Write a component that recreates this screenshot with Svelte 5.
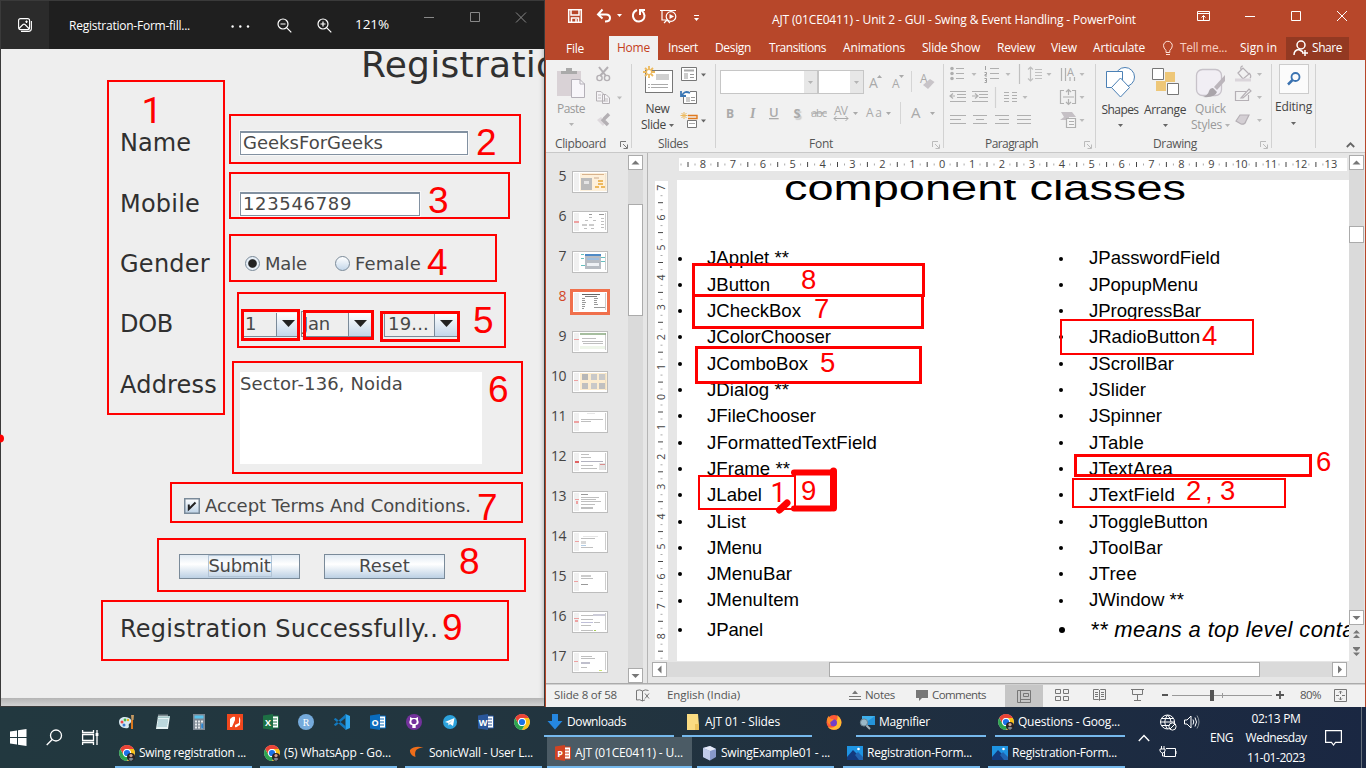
<script>
  // Adjusts tracking so that a label occupies its designed width.
  function fit(node, width) {
    const n = [...node.textContent].length;
    const natural = node.getBoundingClientRect().width;
    node.style.letterSpacing = (width - natural) / n + 'px';
  }

  const tabs = [['Insert', 30, 667], ['Design', 36, 714], ['Transitions', 57, 768], ['Animations', 62, 842], ['Slide Show', 58, 921], ['Review', 38, 996], ['View', 26, 1050], ['Articulate', 52, 1092]];
  const leftList = [['JApplet **', 82], ['JButton', 63], ['JCheckBox', 94], ['JColorChooser', 124], ['JComboBox', 101], ['JDialog **', 82], ['JFileChooser', 109], ['JFormattedTextField', 170], ['JFrame **', 83], ['JLabel', 55], ['JList', 39], ['JMenu', 55], ['JMenuBar', 85], ['JMenuItem', 92], ['JPanel', 56]];
  const rightList = [['JPasswordField', 131], ['JPopupMenu', 109], ['JProgressBar', 112], ['JRadioButton', 111], ['JScrollBar', 85], ['JSlider', 57], ['JSpinner', 73], ['JTable', 55], ['JTextArea', 84], ['JTextField', 86], ['JToggleButton', 119], ['JToolBar', 74], ['JTree', 48], ['JWindow **', 95]];

  const r = '#e88', g = '#aaa', d = '#777';
  const thumbs = [
    [5, [[7, 1, 27, 18, '#fdebd0'], [9, 2, 22, 1, '#c96'], [8, 6, 11, 12, '#a5a5a5'], [11, 9, 5, 3, '#ddd'], [21, 5, 5, 2, '#db9'], [25, 8, 5, 2, '#e7a22a'], [25, 11, 5, 2, '#e7a22a'], [22, 14, 4, 2, '#e7a22a'], [28, 14, 4, 2, '#e7a22a']]],
    [6, [[1, 9, 5, 2, r], [16, 2, 3, 1, d], [16, 5, 3, 1, g], [12, 8, 3, 1, g], [20, 8, 3, 1, g], [9, 12, 5, 2, '#bbb'], [16, 12, 5, 2, '#bbb'], [11, 16, 3, 1, g], [18, 16, 3, 1, g], [26, 2, 5, 1, d], [28, 6, 3, 1, g], [28, 9, 3, 1, g], [28, 12, 3, 1, g], [28, 15, 3, 1, g]]],
    [7, [[12, 2, 16, 2, '#1464b4'], [12, 4, 16, 13, '#a0a6b0'], [14, 6, 12, 2, '#7fa9d3'], [14, 11, 12, 3, '#e9edf2'], [8, 2, 3, 1, '#3aa'], [8, 6, 3, 1, '#3aa'], [8, 13, 4, 1, '#3aa'], [28, 5, 4, 1, '#3aa'], [28, 9, 4, 1, '#3aa']]],
    [8, [[9, 2, 18, 1, '#333'], [12, 4, 12, 1, '#555'], [9, 6, 3, 1, d], [9, 8, 3, 1, d], [9, 10, 4, 1, d], [9, 12, 3, 1, d], [9, 14, 3, 1, d], [9, 16, 2, 1, d], [21, 6, 4, 1, d], [21, 8, 3, 1, d], [21, 10, 3, 1, d], [21, 12, 4, 1, d], [21, 15, 11, 1, d]]],
    [9, [[7, 1, 26, 2, '#89a97f'], [1, 7, 5, 1, r], [9, 6, 14, 1, g], [9, 9, 21, 1, g], [10, 11, 20, 1, g], [7, 14, 25, 3, '#eaf3e3']]],
    [10, [[7, 1, 27, 17, '#fbe6bf'], [9, 2, 6, 6, '#a0a0a0'], [18, 2, 6, 6, '#b8b8b8'], [26, 2, 6, 6, '#b8b8b8'], [9, 11, 6, 6, '#acacac'], [18, 11, 6, 6, '#b8b8b8'], [26, 11, 6, 6, '#acacac'], [1, 8, 4, 1, r]]],
    [11, [[1, 9, 5, 2, r], [8, 7, 22, 1, g], [8, 9, 10, 1, g], [14, 1, 8, 1, '#ddd']]],
    [12, [[2, 9, 4, 2, '#d33'], [8, 2, 8, 1, g], [8, 5, 10, 1, g], [8, 9, 22, 1, '#99a'], [26, 11, 6, 7, '#ddd'], [27, 12, 5, 1, '#c66'], [8, 13, 12, 1, g], [8, 16, 16, 1, g]]],
    [13, [[2, 7, 4, 1, r], [3, 9, 2, 3, r], [8, 2, 7, 1, d], [8, 5, 18, 1, g], [8, 7, 15, 1, g], [8, 9, 20, 1, g], [8, 12, 14, 1, g], [8, 15, 12, 2, g]]],
    [14, [[2, 9, 4, 1, r], [10, 4, 15, 1, '#ddd'], [8, 6, 14, 1, g], [8, 9, 5, 3, '#ccc'], [8, 13, 5, 1, '#9bd'], [8, 15, 12, 1, g]]],
    [15, [[1, 9, 4, 1, r], [8, 3, 10, 2, '#bbb'], [8, 6, 12, 1, g], [8, 12, 7, 1, d]]],
    [16, [[1, 6, 5, 1, r], [2, 8, 3, 2, r], [8, 3, 12, 1, g], [20, 2, 12, 2, '#bbc'], [8, 7, 12, 1, g], [8, 10, 12, 1, '#aac'], [21, 10, 6, 1, g], [8, 13, 10, 1, g], [8, 18, 12, 1, g], [21, 18, 2, 1, '#8b2']]],
    [17, [[1, 9, 4, 1, r], [8, 4, 11, 1, g], [8, 6, 14, 1, g], [8, 10, 9, 2, '#aab'], [8, 15, 6, 1, g], [26, 18, 3, 1, '#bd4']]]
  ];

  const boxes = [
    [107, 80, 118, 335, 2], [229, 114, 292, 50, 2], [229, 172, 281, 47, 2], [229, 234, 268, 48, 2], [237, 292, 269, 56, 2],
    [241, 309, 59, 32, 3], [303, 310, 71, 30, 3], [380, 311, 80, 31, 3], [232, 361, 291, 113, 2], [170, 482, 353, 41, 2],
    [157, 538, 369, 54, 2], [101, 600, 408, 61, 2],
    [692, 263, 233, 34, 3], [692, 294, 232, 35, 3], [695, 346, 227, 38, 3], [698, 475, 98, 35, 2],
    [1060, 319, 194, 36, 2], [1074, 454, 238, 23, 3], [1072, 478, 214, 30, 2]
  ];
  const marks = [
    ['1', 141.5, 123], ['2', 476, 155], ['3', 428, 213], ['4', 427, 275], ['5', 473, 333], ['6', 488, 402], ['7', 477, 520], ['8', 459, 574], ['9', 442, 640]
  ];
  const smallMarks = [['8', 801, 289], ['7', 814, 318], ['5', 820, 372], ['1', 770.5, 502], ['9', 801, 500], ['4', 1202, 345], ['6', 1316, 471], ['2', 1186, 500], [',', 1205, 500], ['3', 1220, 500]];

  const pinned = ['paint', 'notepad', 'calc', 'nitro', 'excel', 'r', 'code', 'outlook', 'github', 'telegram', 'word', 'chrome'];
  const topTasks = [['down', 'Downloads', 59, 130, 0, 0], ['folder', 'AJT 01 - Slides', 75, 130, 8, 0], ['firefox', '', 0, 36, 4, 0], ['magnify', 'Magnifier', 51, 130, 4, 0], ['chromeUser', 'Questions - Goog...', 102, 130, 9, 0]];
  const bottomTasks = [['chromeUser', 'Swing registration ...', 107, 137, 0, 1], ['chromeUser', '(5) WhatsApp - Go...', 107, 137, 8, 1], ['sonic', 'SonicWall - User L...', 104, 137, 8, 1], ['ppt', 'AJT (01CE0411) - U...', 108, 145, 5, 5], ['java', 'SwingExample01 - ...', 109, 137, 5, 1], ['photo', 'Registration-Form...', 105, 137, 9, 1], ['photo', 'Registration-Form...', 105, 137, 8, 1]];
  const hNums = Array.from({ length: 22 }, (_, i) => i - 8);
  const vNums = Array.from({ length: 16 }, (_, i) => i - 7);
</script>

{#snippet caret(c = '#b4b4b4')}<svg class="caret" width="5" height="3"><path d="M0 0H5L2.5 3Z" fill={c} /></svg>{/snippet}
{#snippet launcher(c = '#777')}<svg width="8" height="8" fill="none" stroke={c}><path d="M.5 6V.5H6M3 3L7 7M7.5 3.5V7.5H3.5" /></svg>{/snippet}
{#snippet chrome()}
  <circle cx="8" cy="8" r="7.8" fill="#fff" />
  <path d="M1.2 4.1A7.8 7.8 0 0 1 14.8 4.1H8A4 4 0 0 0 4.5 9.9Z" fill="#ea4335" />
  <path d="M14.8 4.1A7.8 7.8 0 0 1 8 15.8L11.5 10A4 4 0 0 0 8 4.1Z" fill="#fbc116" />
  <path d="M1.2 4.1A7.8 7.8 0 0 0 8 15.8L11.4 10A4 4 0 0 1 4.5 10Z" fill="#2da44e" />
  <circle cx="8" cy="8" r="3.9" fill="#fff" /><circle cx="8" cy="8" r="3.1" fill="#1a73e8" />
{/snippet}
{#snippet app(name)}
  <svg class="app" width="16" height="16" viewBox="0 0 16 16">
    {#if name === 'paint'}
      <path d="M0 8C0 3 6 2 10 4C14 6 12 9 10 10C9 11 11 13 9 14C4 15 0 12 0 8Z" fill="#d7e8f0" /><circle cx="3" cy="8" r="1.5" fill="#e44" /><circle cx="6" cy="6" r="1.4" fill="#48b64b" /><circle cx="5" cy="11" r="1.5" fill="#3b7bd0" /><circle cx="9" cy="6" r="1.2" fill="#e7b21a" /><path d="M13 6V15" stroke="#d9781e" stroke-width="2" /><path d="M12 1h3l-.5 5h-2z" fill="#c79a62" />
    {:else if name === 'notepad'}
      <path d="M3 2H15L13 15H1Z" fill="#e7f3f4" /><path d="M3 2H15L14.6 4H2.7Z" fill="#a5c9ca" /><path d="M3 6H13M3 8H13M2.5 10H12.5M2.3 12H12" stroke="#8ebbc4" /><path d="M4 .5V3M6 .5V3M8 .5V3M10 .5V3M12 .5V3" stroke="#d7dee0" />
    {:else if name === 'calc'}
      <path d="M2 0H14V16H2Z" fill="#7d8893" /><path d="M3.5 1.5h9v3h-9z" fill="#57c2ec" /><path d="M4 7.5h8M4 10.5h8M4 13.5h8" stroke="#e5e9ec" stroke-width="2" stroke-dasharray="2 1" /><path d="M10.2 9.5h2v5h-2z" fill="#2b84d0" />
    {:else if name === 'nitro'}
      <path d="M0 0H16V16H0Z" fill="#f1471d" /><path d="M3 5C5 4 5 2 8 3V11L12 9V3C14 5 13 8 13 11C10 12 10 14 8 13V6L5 13H3Z" fill="#fff" />
    {:else if name === 'excel' || name === 'word' || name === 'outlook' || name === 'ppt'}
      {@const c = { excel: '#1d7044', word: '#2a5699', outlook: '#0a6cbd', ppt: '#d04423' }[name]}
      <path d="M8 2H15.5V14H8Z" fill="#fff" stroke={c} /><path d="M10 5H14M10 8H14M10 11H14" stroke={c} /><path d="M0 1.5L10 0V16L0 14.5Z" fill={c} />
      <text x="5" y="11.5" text-anchor="middle" font-size="9" font-weight="700" fill="#fff">{{ excel: 'X', word: 'W', outlook: 'O', ppt: 'P' }[name]}</text>
    {:else if name === 'r'}
      <circle cx="8" cy="8" r="8" fill="#75aadb" /><text x="8" y="11.5" text-anchor="middle" font-size="10" fill="#fff" class="serif">R</text>
    {:else if name === 'code'}
      <path d="M11.5 0L16 2V14L11.5 16Z" fill="#2aa5ee" /><path d="M0 5L1.6 4L12 12.5V16L0 5.5ZM0 11L1.6 12L12 3.5V0L0 10.5Z" fill="#1379be" />
    {:else if name === 'github'}
      <circle cx="8" cy="8" r="8" fill="#73329c" /><path d="M4 3L6 4H10L12 3V6C14 10 11 11 9.7 11V14H6.3V11C5 11 2 10 4 6Z" fill="#fff" /><circle cx="8" cy="7.5" r="2.6" fill="#73329c" />
    {:else if name === 'telegram'}
      <circle cx="8" cy="8" r="7" fill="#2ca2dc" /><path d="M3 8L12.5 4L11 12L8 10L6.5 11.5L6.3 9Z" fill="#fff" /><path d="M6.3 9L11 5.5L7.5 9.5Z" fill="#b5d8ea" />
    {:else if name === 'chrome'}{@render chrome()}
    {:else if name === 'chromeUser'}
      {@render chrome()}<circle cx="12" cy="12" r="4" fill="#2a2426" /><circle cx="12" cy="10.5" r="1.6" fill="#dca48d" /><path d="M9.5 14Q12 11.5 14.5 14L12 16Z" fill="#7f8994" />
    {:else if name === 'sonic'}
      <path d="M1 5C4 1.5 9 1 14.5 2.5C8 3 5 5 6.5 12C3 11 .5 8 1 5Z" fill="#ee6d1a" />
    {:else if name === 'down'}
      <path d="M5 0H11V7H15.5L8 15.5L.5 7H5Z" fill="#2587e0" />
    {:else if name === 'folder'}
      <path d="M2 0H13L14 12V16H2Z" fill="#fbdc82" /><path d="M10 15.9V10H14V16Z" fill="#ecc35c" />
    {:else if name === 'firefox'}
      <circle cx="8" cy="8.5" r="7.5" fill="#ff5a36" /><path d="M11 1C15 4 16 8 15 11C13 17 5 17 2 13C7 15 12 12 10 7C12 5 12 3 11 1Z" fill="#ffbd30" /><circle cx="7.5" cy="8.7" r="3.5" fill="#7440c7" /><path d="M1 5L2.5 2L5 5L8 5L6 7Q3 8 5 11Q1 10 1 5Z" fill="#ff8a28" />
    {:else if name === 'magnify'}
      <path d="M3 2H16V11H3Z" fill="#3eb0ec" /><path d="M3 11L16 2V11Z" fill="#2493da" /><circle cx="5" cy="8.5" r="3.6" fill="#9cb9c8" stroke="#6f8591" /><path d="M7.5 11.5L11 15" stroke="#a7b3b9" stroke-width="2" />
    {:else if name === 'java'}
      <path d="M2 3L9 1L15 4V12L9 15.5L2 12Z" fill="#8798c8" /><path d="M2 3L9 1L15 4L9 6Z" fill="#e5eaf8" /><path d="M2 3L9 6V15.5L2 12Z" fill="#c0cbe9" />
    {:else}
      <path d="M0 1H16V15H0Z" fill="#1e94e2" /><path d="M0 12L6 5L16 15H0Z" fill="#133a7d" /><path d="M8 10L11 7L16 12V15H12Z" fill="#2164b0" /><circle cx="11.5" cy="4" r="1.3" fill="#fff" />
    {/if}
  </svg>
{/snippet}
{#snippet task(t)}
  <div class="task" class:active={t[0] === 'ppt'} class:bare={!t[1]} style:width="{t[3]}px" style:margin-left="{t[4]}px" style:--pad="{t[5] + 3}px">
    {@render app(t[0])}{#if t[1]}<span use:fit={t[2]}>{t[1]}</span>{/if}
  </div>
{/snippet}
{#snippet arrowBtn(path)}<div class="sb-btn"><svg width="9" height="9" viewBox="0 0 9 9"><path d={path} fill="#777" /></svg></div>{/snippet}

<main>
  <section class="photos">
    <header>
      <div class="home">
        <svg width="14" height="14" fill="none" stroke="#fff" stroke-width="1.1"><rect x=".6" y=".6" width="11" height="11" rx="2" /><path d="M3 13.4H10.5Q13.4 13.4 13.4 10.5V3M1 10.5L5 6.5Q6 5.7 7 6.5L11.4 11" /><path d="M7.2 3.8H9.8M8.5 2.5V5.1" /></svg>
      </div>
      <span class="file" use:fit={121}>Registration-Form-fill...</span>
      <svg class="dots" width="19" height="3" fill="#fff"><circle cx="1.6" cy="1.5" r="1.2" /><circle cx="9.3" cy="1.5" r="1.2" /><circle cx="17" cy="1.5" r="1.2" /></svg>
      <svg class="zo" width="15" height="15" fill="none" stroke="#fff" stroke-width="1.2"><circle cx="6" cy="6" r="5" /><path d="M3.5 6H8.5M9.8 9.8L14.3 14.3" /></svg>
      <svg class="zi" width="15" height="15" fill="none" stroke="#fff" stroke-width="1.2"><circle cx="6" cy="6" r="5" /><path d="M3.5 6H8.5M6 3.5V8.5M9.8 9.8L14.3 14.3" /></svg>
      <span class="pct" use:fit={34}>121%</span>
      <svg class="win" width="102" height="11" fill="none" stroke="#888"><path d="M0 5.5H10M46.5 .5H55.5V9.5H46.5ZM92 .5L102 10.5M102 .5L92 10.5" /></svg>
    </header>
    <div class="form">
      <h1><span use:fit={324}>Registration Form</span></h1>
      <div class="row"><label for="nm"><b use:fit={71}>Name</b></label><div class="field wide" id="nm"><span use:fit={140}>GeeksForGeeks</span></div></div>
      <div class="row"><label for="mb"><b use:fit={80}>Mobile</b></label><div class="field" id="mb"><span use:fit={109}>123546789</span></div></div>
      <div class="row"><label for="gd"><b use:fit={90}>Gender</b></label>
        <div class="radios" id="gd"><i class="on"></i><span use:fit={42}>Male</span><i class="second"></i><span use:fit={66}>Female</span></div>
      </div>
      <div class="row"><label for="dob"><b use:fit={53}>DOB</b></label>
        <div class="combos" id="dob">
          {#each [['1', 59, 10], ['Jan', 71, 27], ['19...', 74, 41]] as c}
            <div class="combo" style:width="{c[1]}px"><span use:fit={c[2]}>{c[0]}</span><em><svg width="13" height="8"><path d="M0 0H13L6.5 7Z" fill="#222" /></svg></em></div>
          {/each}
        </div>
      </div>
      <div class="row address"><label for="ad"><b use:fit={97}>Address</b></label><div class="area" id="ad"><span use:fit={163}>Sector-136, Noida</span></div></div>
      <div class="terms"><svg width="16" height="16"><rect x=".75" y=".75" width="14.5" height="14.5" fill="url(#blu)" stroke="#7a8a99" stroke-width="1.5" /><defs><linearGradient id="blu" x2="0" y2="1"><stop stop-color="#fff" /><stop offset="1" stop-color="#bdd2e6" /></linearGradient></defs><path d="M4.8 6.5V11.2L11.5 4.5" fill="none" stroke="#222" stroke-width="2" /></svg><span use:fit={266}>Accept Terms And Conditions.</span></div>
      <div class="buttons"><div class="btn"><u><span use:fit={62}>Submit</span></u></div><div class="btn"><span use:fit={51}>Reset</span></div></div>
      <div class="result"><span use:fit={318}>Registration Successfully..</span></div>
    </div>
    <div class="shade"></div>
  </section>

  <section class="ppt">
    <header>
      <svg class="quick" width="150" height="20" viewBox="562 6 150 20" fill="none" stroke="#fff" stroke-width="1.5">
        <path d="M568.7 9.7H581.3V22.3H568.7ZM571 10V15H579V10M571.5 22V18H578.5V22" /><path d="M576 19V22" />
        <path d="M598 14.5H606Q610 14.5 610 18T605 21.5M602.5 9.5L598 14.5L602.5 18.5" stroke-width="2" /><path d="M617 14H622L619.5 17Z" fill="#fff" stroke="none" />
        <path d="M637 10Q632.5 12 633 16.5Q634 21.5 639 21.5Q644.5 21 644.5 15.5Q644 12 641.5 10.5M640 15V10H645" stroke-width="2" />
        <path d="M660 10.5H676M662 11V20H667M664 23L667 20L670 23" stroke-width="1.2" /><circle cx="671" cy="16.5" r="4.8" stroke-width="1.2" /><path d="M669.5 14L674 16.5L669.5 19Z" fill="#fff" stroke="none" />
        <path d="M694 15.5H699" stroke-width="1" /><path d="M694 18H699L696.5 21Z" fill="#fff" stroke="none" />
      </svg>
      <span class="title" use:fit={364}>AJT (01CE0411) - Unit 2 - GUI - Swing &amp; Event Handling - PowerPoint</span>
      <svg class="ctl" width="151" height="12" fill="none" stroke="#fff"><path d="M.5 1.5H12.5V10.5H.5ZM.5 3.5H12.5M6.5 10V5.5M4.5 7.5L6.5 5.5L8.5 7.5M48 6.5H58M94.5 1.5H103.5V10.5H94.5ZM140 1L150 11M150 1L140 11" /></svg>
    </header>
    <nav>
      <div class="filetab"><span use:fit={18}>File</span></div>
      <div class="hometab"><span use:fit={33}>Home</span></div>
      <div class="tabs">{#each tabs as t, i}<span style:margin-left="{i ? t[2] - tabs[i - 1][2] - tabs[i - 1][1] : 9}px" use:fit={t[1]}>{t[0]}</span>{/each}</div>
      <svg class="bulb" width="10" height="15" fill="none" stroke="#ffe2d8"><path d="M3 9.5Q.5 7 .5 4.7A4.4 4.4 0 0 1 9.3 4.7Q9.3 7 6.8 9.5V11.5H3ZM3 13.5H7" /></svg>
      <span class="tell" use:fit={47}>Tell me...</span><span class="sign" use:fit={37}>Sign in</span>
      <div class="share"><svg width="16" height="17" fill="none" stroke="#fff" stroke-width="1.5"><circle cx="8" cy="5" r="4" /><path d="M1 15Q1 10 6 9.5L10 12M12 10V16M9 13H15" /></svg><span use:fit={30}>Share</span></div>
    </nav>
    <div class="ribbon">
      <div class="group" style:width="86px">
        <div class="gbody">
          <div class="big paste"><svg width="29" height="32" viewBox="559 67 29 32"><path d="M559 71H583V96H559Z" fill="#d9d2d6" /><path d="M563 74V71H568V68H574V71H579V74Z" fill="#aaa" /><path d="M573.5 79.5H582L586.5 84V97.5H573.5Z" fill="#f8f6fa" stroke="#b4b0b8" /><path d="M582 79.5V84H587" fill="none" stroke="#b4b0b8" /></svg><span class="dim" use:fit={28}>Paste</span>{@render caret()}</div>
          <svg class="tools" width="35" height="65" viewBox="594 64 35 65" fill="none" stroke="#b4b0b4" stroke-width="1.4"><path d="M599 67L606 76M608 67L600 76" stroke-width="2" /><circle cx="599.5" cy="78" r="2.6" /><circle cx="607" cy="78" r="2.6" /><path d="M596.5 91.5H601L604.5 95V101H596.5ZM602.5 94.5H606L609.5 98V103.5H602.5Z" fill="#f5f3f6" stroke-width="1" /><path d="M598 95H601M598 98H601M604 99H608M604 101H608" stroke-width=".8" /><path d="M617 96.5H622L619.5 99.5Z" fill="#bbb" stroke="none" /><path d="M597 120L601 117L606 122L603 126Z" fill="#ded9dd" stroke="none" /><path d="M602 119L608 125M604 119L609 114" stroke-width="3.5" /></svg>
        </div>
        <footer><span use:fit={51}>Clipboard</span><div class="la">{@render launcher()}</div></footer>
      </div>
      <div class="group" style:width="84px">
        <div class="gbody">
          <div class="big new"><svg width="31" height="30" viewBox="640 65 31 30"><rect x="643.5" y="70.5" width="27" height="22" fill="#fff" stroke="#777" /><path d="M654 74H667V80H654Z" fill="#d0d0d0" /><path d="M646 84.5H667M646 87.5H667" stroke="#aaa" stroke-dasharray="2 1 17 1" /><path d="M647 66V78M641 72H653M643 68L651 76M651 68L643 76" stroke="#ecb95e" stroke-width="1.8" /><circle cx="647" cy="72" r="2" fill="#fff" /></svg><span use:fit={24}>New</span><div class="sl"><span use:fit={25}>Slide</span>{@render caret('#666')}</div></div>
          <svg class="tools2" width="27" height="63" viewBox="680 66 27 63" fill="none" stroke="#777"><path d="M681.5 67.5H696.5V80.5H681.5Z" fill="#fff" /><path d="M684 70.5H694" stroke="#aaa" stroke-width="2" /><path d="M684 73H688V79H684Z" fill="#ccc" stroke="none" /><path d="M690 74.5H694M690 77.5H694" stroke="#999" /><path d="M701 73.5H706L703.5 76.5Z" fill="#666" stroke="none" /><path d="M683.5 96V103.5H696.5V91.5H690" fill="#fff" /><path d="M686 97H690V102H686Z" fill="#ccc" stroke="none" /><path d="M691 97.5H695M691 100.5H695" stroke="#999" /><path d="M682 96Q684 90 690 93M681 91V96H686" stroke="#3a76b4" stroke-width="1.8" /><path d="M684 112V119M680.5 115.5H687.5M681.5 113L686.5 118M686.5 113L681.5 118" stroke="#ecb95e" /><path d="M688 115.5H697V118.5H688" stroke="#e07a1f" stroke-width="1.4" /><path d="M687.5 120.5H696.5V127.5H687.5Z" fill="#fff" /><path d="M689 123.5H695" stroke="#aaa" /><path d="M701 119.5H706L703.5 122.5Z" fill="#666" stroke="none" /></svg>
        </div>
        <footer class="mid"><span use:fit={30}>Slides</span></footer>
      </div>
      <div class="group" style:width="228px">
        <div class="gbody font">
          <div class="frow"><div class="sel"><em>{@render caret()}</em></div><div class="sel small"><em>{@render caret()}</em></div>
            <svg width="79" height="26" viewBox="865 69 79 26" fill="#aaa" font-size="14"><text x="870" y="88">A</text><path d="M878 78H883L880.5 75Z" /><text x="893" y="88" font-size="12">A</text><path d="M900 75H905L902.5 78Z" /><path d="M912.5 71V92" stroke="#d5d5d5" /><text x="921" y="83" font-size="12">A</text><path d="M924 85L931 79L935.5 82L929 89Z" fill="#c8c4c8" /></svg>
          </div>
          <svg class="style" width="227" height="24" viewBox="716 102 227 24" fill="#aaa" font-size="13"><text x="726" y="118" font-weight="700" font-size="12">B</text><text x="750" y="118" class="serif" font-style="italic" font-size="14" font-weight="700">I</text><text x="769" y="117" text-decoration="underline" font-weight="600">U</text><text x="793.5" y="118" font-weight="700" class="sh">S</text><text x="811" y="117" font-size="11" text-decoration="line-through" textLength="16">abc</text><text x="834" y="115" font-size="12" textLength="14">AV</text><path d="M834 118.5H848M836.5 116L834 118.5L836.5 121M845.5 116L848 118.5L845.5 121" fill="none" stroke="#aaa" /><path d="M853 112H858L855.5 115Z" /><text x="866" y="117" font-size="12" textLength="16">Aa</text><path d="M886 112H891L888.5 115ZM930 112H935L932.5 115Z" /><path d="M900.5 102V124" stroke="#d5d5d5" /><text x="911" y="118" font-size="15">A</text></svg>
        </div>
        <footer class="mid"><span class="fl" use:fit={24}>Font</span><div class="la">{@render launcher('#bbb')}</div></footer>
      </div>
      <div class="group" style:width="152px">
        <div class="gbody">
          <svg width="150" height="70" viewBox="945 62 150 70" fill="none" stroke="#b0b0b0" stroke-width="1.2">
            {#each [68.5, 73.5, 78.5] as y}<path d="M957 {y}H965M991 {y}H1000" /><circle cx="953" cy={y} r="1.2" fill="#aaa" />{/each}
            <path d="M986.5 66V70M985.5 72.5H987.5V74.5H986V76H988M985.5 78.5H987.5V82.5H985.5M986 80.5H987" stroke="#999" stroke-width=".9" />
            <path d="M1020.5 64V84M1031.5 67V81M1029 69.5L1031.5 67L1034 69.5M1029 78.5L1031.5 81L1034 78.5M1036 69.5H1043M1036 72.5H1043M1036 75.5H1043M1036 78.5H1043" stroke="#c0c0c0" />
            <path d="M1062.5 68V81M1066.5 68V81M1071 77V81M1075.5 77V81" /><text x="1068" y="76" font-size="11" fill="#aaa" stroke="none">A</text>
            <path d="M951 91.5H967M958 94.5H967M958 97.5H967M951 101.5H967M951 96H956M954 93.5L951 96L954 98.5M973 91.5H989M980 94.5H989M980 97.5H989M973 101.5H989M973 96H978M976 93.5L979 96L976 98.5" /><path d="M996.5 87V108" stroke="#d2d2d2" />
            <path d="M1005 92.5H1010M1013 92.5H1018M1005 95.5H1010M1013 95.5H1018M1005 98.5H1010M1013 98.5H1018M1005 101.5H1010M1013 101.5H1018" />
            <path d="M1065 90.5H1061.5V103.5H1065M1073 90.5H1076.5V103.5H1073M1069.5 95V90M1067 92L1069.5 89.5L1072 92M1069.5 99V104M1067 102L1069.5 104.5L1072 102M1064 97H1075" />
            <path d="M951 115.5H967M951 119.5H962M951 123.5H967M974 115.5H988M977 119.5H985M974 123.5H988M996 115.5H1010M1000 119.5H1010M996 123.5H1010M1018 115.5H1032M1018 119.5H1032M1018 123.5H1032" />
            <path d="M1062 112H1073L1077 117H1070V120H1061L1065 117Z" fill="#c5c0c5" stroke="none" /><path d="M1067.5 118.5H1076.5V127.5H1067.5ZM1070 121.5H1075M1070 124.5H1075" fill="#f5f5f5" />
            {#each [[975, 74], [1009, 74], [1050, 74], [1083, 74], [1026, 97], [1083, 97], [1083, 120]] as c}<path d="M{c[0] - 2.5} {c[1] - 1}h5l-2.5 3z" fill="#bbb" stroke="none" />{/each}
          </svg>
        </div>
        <footer class="mid"><span class="pl" use:fit={53}>Paragraph</span><div class="la">{@render launcher('#bbb')}</div></footer>
      </div>
      <div class="group" style:width="176px">
        <div class="gbody">
          <div class="big shapes"><svg width="30" height="30" viewBox="1105 67 30 30" fill="#fff" stroke="#4b80b5"><circle cx="1125" cy="77" r="9.5" /><path d="M1106.5 71.5H1122.5V87.5H1106.5Z" /><path d="M1120.5 78L1129.5 87.5L1120.5 97L1111.5 87.5Z" /></svg><span use:fit={37}>Shapes</span>{@render caret('#666')}</div>
          <div class="big arrange"><svg width="28" height="30" viewBox="1150 67 28 30"><path d="M1164 72H1174V82H1164ZM1155 81H1165V91H1155Z" fill="#eec778" /><path d="M1151.5 68.5H1162.5V79.5H1151.5ZM1166.5 83.5H1177.5V94.5H1166.5Z" fill="#fff" stroke="#777" /></svg><span use:fit={42}>Arrange</span>{@render caret('#666')}</div>
          <div class="big styles"><svg width="31" height="32" viewBox="1196 67 31 32"><rect x="1197.5" y="69.5" width="25" height="26" rx="6" fill="#f1eef4" stroke="#c7c2c9" stroke-width="1.3" /><path d="M1226 75V81L1218 90L1215 87Z" fill="#bbb5bb" /><path d="M1214 88L1218 92Q1216 98 1204 97Q1209 95 1210 91Q1211 88 1214 88Z" fill="#aaa5aa" /></svg><span class="dim" use:fit={31}>Quick</span><div class="sl dim"><span use:fit={31}>Styles</span>{@render caret()}</div></div>
          <svg class="tools3" width="30" height="62" viewBox="1234 65 30 62" fill="none" stroke="#b5b0b5" stroke-width="1.2"><path d="M1238 73L1243 68L1249 74L1243 79ZM1241 70Q1240 66 1243 66M1249 73Q1252 76 1250 78" /><path d="M1235 80H1251" stroke="#dad5da" stroke-width="3" /><path d="M1246 91.5H1235.5V100.5H1248.5V95M1241 98L1249 89L1251 91L1243 98Z" /><path d="M1236 121L1240 115H1249L1246 121Q1245 125 1241 124Z" fill="#d4cfd4" />{#each [74, 97, 120] as y}<path d="M1257 {y - 1}h5l-2.5 3z" fill="#bbb" stroke="none" />{/each}</svg>
        </div>
        <footer class="mid"><span class="dl" use:fit={44}>Drawing</span><div class="la">{@render launcher('#bbb')}</div></footer>
      </div>
      <div class="group" style:width="44px">
        <div class="big edit"><div class="find"><svg width="14" height="14" fill="none" stroke="#3a72b0" stroke-width="1.8"><circle cx="8.5" cy="5" r="4" /><path d="M5.5 8L1 12.5" stroke-width="2.5" /></svg></div><span use:fit={37}>Editing</span>{@render caret('#666')}</div>
      </div>
      <svg class="collapse" width="9" height="6" fill="none" stroke="#666" stroke-width="1.8"><path d="M.8 5L4.5 1.3L8.2 5" /></svg>
    </div>

    <div class="work">
      <aside>
        <div class="slides">
          {#each thumbs as t}
            <div class="th" class:cur={t[0] === 8}><span use:fit={t[0] > 9 ? 15 : 7.5}>{t[0]}</span><div class="pic"><svg width="34" height="20" shape-rendering="crispEdges"><path d="M1 1H6V19H1Z" fill="#f0f0f0" /><path d="M32.5 1V18" stroke="#ccc" /><g opacity=".75">{#each t[1] as q}<rect x={q[0]} y={q[1]} width={q[2]} height={q[3]} fill={q[4]} />{/each}</g></svg></div></div>
          {/each}
        </div>
        <div class="vbar">{@render arrowBtn('M0.5 6.5L4.5 2.5L8.5 6.5Z')}<div class="track"><div class="handle"></div></div>{@render arrowBtn('M0.5 3L4.5 7L8.5 3Z')}</div>
      </aside>
      <div class="edit-area">
        <svg class="hruler" width="668" height="13" viewBox="679 158 668 13">
          <rect x="679" y="158" width="668" height="13" fill="#fff" />
          {#each hNums as n}{@const x = 942.2 + n * 29.9}<text {x} y="168" text-anchor="middle" font-size="11" fill="#444">{Math.abs(n)}</text><path d="M{x - 15} 162V167" stroke="#444" /><path d="M{x - 8} 163.5v2M{x - 22} 163.5v2" stroke="#aaa" />{/each}
        </svg>
        <div class="mid-row">
          <svg class="vruler" width="13" height="479" viewBox="655 181 13 479">
            <rect x="655" y="181" width="13" height="479" fill="#fff" />
            {#each vNums as n}{@const y = 397 + n * 29.9}<text x="0" y="0" transform="translate(665 {y}) rotate(-90)" text-anchor="middle" font-size="10.5" fill="#444">{Math.abs(n)}</text><path d="M658 {y + 15}h5" stroke="#444" /><path d="M660.5 {y + 8}h2M660.5 {y + 22}h2" stroke="#aaa" />{/each}
          </svg>
          <div class="slide">
            <svg class="head" width="410" height="30"><text x="6" y="19.5" font-size="34.5" textLength="402" lengthAdjust="spacingAndGlyphs">component classes</text></svg>
            <div class="cols">
              <ul>{#each leftList as l}<li><span use:fit={l[1]}>{l[0]}</span></li>{/each}</ul>
              <ul>{#each rightList as l}<li><span use:fit={l[1]}>{l[0]}</span></li>{/each}<li class="note"><span use:fit={303}>** means a top level container</span></li></ul>
            </div>
          </div>
        </div>
        <div class="hbar">{@render arrowBtn('M6.5 .5L2.5 4.5L6.5 8.5Z')}<div class="track"><div class="handle"></div></div>{@render arrowBtn('M3 .5L7 4.5L3 8.5Z')}</div>
      </div>
      <div class="vbar right">{@render arrowBtn('M0.5 6.5L4.5 2.5L8.5 6.5Z')}<div class="track"><div class="handle"></div></div>{@render arrowBtn('M0.5 3L4.5 7L8.5 3Z')}
        <svg width="15" height="36" fill="#777"><path d="M4 8.5L7.5 5L11 8.5ZM4 13L7.5 9.5L11 13ZM4 23H11L7.5 26.5ZM4 27.5H11L7.5 31ZM4 22H11V23H4Z" /></svg>
      </div>
    </div>
    <div class="status">
      <span class="s1" use:fit={63}>Slide 8 of 58</span>
      <svg class="s2" width="15" height="13" fill="none" stroke="#777"><path d="M6.5 2Q4 0 .5 1.5V11Q4 10 6.5 12Q8 11 9 11M6.5 2V12M6.5 2Q9 0 12.5 1.5M9 4.5L13 9.5M13 4.5L9 9.5" /></svg>
      <span class="s3" use:fit={73}>English (India)</span>
      <svg class="s4" width="12" height="12"><path d="M3 5L6 1.5L9 5Z" fill="#777" /><path d="M0 7.5H12M0 10.5H12" stroke="#777" /></svg>
      <span class="s5" use:fit={30}>Notes</span>
      <svg class="s6" width="12" height="12"><path d="M0 1H12V9H6L3 12V9H0Z" fill="#777" /></svg>
      <span class="s7" use:fit={54}>Comments</span>
      <div class="view"><svg width="14" height="13" fill="none" stroke="#777"><path d="M.5 .5H13.5V12.5H.5ZM3.5 .5V12.5M6.5 3.5H11.5V6.5H6.5ZM4 9.5H13" /></svg></div>
      <svg class="s8" width="90" height="14" fill="none" stroke="#777"><path d="M.5 1.5H5.5V5.5H.5ZM8.5 1.5H13.5V5.5H8.5ZM.5 8.5H5.5V12.5H.5ZM8.5 8.5H13.5V12.5H8.5ZM38.5 1.5H43.5L44.5 2.5L45.5 1.5H50.5V11.5H45.5L44.5 12.5L43.5 11.5H38.5ZM44.5 2V12M40 4.5H43M40 6.5H43M40 8.5H43M46 4.5H49M46 6.5H49M46 8.5H49M76 1.5H89M77.5 2V6.5H87.5V2M82.5 7V12M79 12.5H86" /></svg>
      <svg class="slider" width="122" height="12"><path d="M0 6H6M114 6H122M118 2V10" stroke="#555" stroke-width="1.8" /><path d="M10 6.5H110M60.5 4V9" stroke="#999" /><path d="M48 1H52V12H48Z" fill="#555" /></svg>
      <span class="s9" use:fit={21}>80%</span>
      <svg width="13" height="13" fill="none" stroke="#777"><path d="M.5 .5H12.5V12.5H.5ZM6.5 2V5M6.5 8V11M2 6.5H5M8 6.5H11M5 3.5L6.5 2L8 3.5M5 9.5L6.5 11L8 9.5" /></svg>
    </div>
  </section>

  <section class="taskbar">
    <div class="sys">
      <svg width="17" height="17" fill="#fff"><path d="M0 2.4L7 1.4V8H0ZM8 1.2L16.5 0V8H8ZM0 9H7V15.6L0 14.6ZM8 9H16.5V17L8 15.8Z" /></svg>
      <svg width="17" height="17" fill="none" stroke="#fff" stroke-width="1.3"><circle cx="10" cy="6.5" r="5.5" /><path d="M6.2 10.5L.7 16" /></svg>
      <svg width="17" height="17" fill="none" stroke="#fff" stroke-width="1.3"><path d="M.6 1V3.5H11.5V1M.6 5.5H11.5V11.5H.6ZM.6 16V13.5H11.5V16M15 1V16" /><path d="M13.6 4H16.4V7H13.6Z" fill="#fff" stroke="none" /></svg>
    </div>
    <div class="apps">
      <div class="line"><div class="pins">{#each pinned as p}{@render app(p)}{/each}</div>{#each topTasks as t}{@render task(t)}{/each}</div>
      <div class="line second">{#each bottomTasks as t}{@render task(t)}{/each}</div>
    </div>
    <svg class="up" width="12" height="8" fill="none" stroke="#fff" stroke-width="1.4"><path d="M.8 7L6 1.5L11.2 7" /></svg>
    <svg class="tray" width="42" height="48" fill="none" stroke="#fff"><circle cx="7.5" cy="8" r="7" /><path d="M.5 8H14.5M2 4.5H13M2 11.5H9M7.5 1Q2 8 7.5 15M7.5 1Q11 4 11 8" /><circle cx="12.5" cy="12.5" r="3.6" fill="#1f2f40" /><path d="M10 15L15 10" /><path d="M24.5 6H27L31 2V14L27 10H24.5ZM33 5.5Q34.5 8 33 10.5M35 3.5Q38 8 35 12.5" /><path d="M37 1.5Q41 8 37 14.5" stroke="#8a949c" /><path d="M6 34.5H15.5V42.5H4.5V38M16 37V40M0 35H5V37Q4 39 2.5 39Q1 39 0 37ZM1.5 32V35M4 32V35M2.5 39V42H5" /></svg>
    <span class="lang" use:fit={23}>ENG</span>
    <div class="clock"><span use:fit={49}>02:13 PM</span><span use:fit={61}>Wednesday</span><span use:fit={58}>11-01-2023</span></div>
    <svg class="act" width="17" height="17" fill="none" stroke="#fff" stroke-width="1.2"><path d="M.6 1.6H16.4V13.4H10.5L8.5 16L6.5 13.4H.6Z" /></svg>
    <div class="peek"></div>
  </section>

  <svg class="notes-layer" width="1366" height="768" fill="none" stroke="#f00">
    {#each boxes as b}<rect x={b[0] + b[4] / 2} y={b[1] + b[4] / 2} width={b[2] - b[4]} height={b[3] - b[4]} stroke-width={b[4]} shape-rendering="crispEdges" />{/each}
    <path d="M794 472.5H833.5M794 508.5H831" stroke-width="6" stroke-linecap="round" /><path d="M833.5 471V508" stroke-width="7" stroke-linecap="round" />
    <path d="M779.5 510L787 503" stroke-width="7" stroke-linecap="round" />
    <g fill="#f00" stroke="none" font-size="37">{#each marks as m}<text x={m[1]} y={m[2]} class:one={m[0] === '1'}>{m[0]}</text>{/each}</g>
    <g fill="#f00" stroke="none" font-size="27.5">{#each smallMarks as m}<text x={m[1]} y={m[2]} class:one={m[0] === '1'}>{m[0]}</text>{/each}</g>
    <circle cx="0" cy="438.5" r="4" fill="#f00" stroke="none" />
  </svg>
</main>

<style>
  :global(body) { margin: 0; overflow: hidden; }
  main { position: relative; width: 1366px; height: 768px; overflow: hidden; background: #20323c; font: 12px/16px 'Open Sans', 'Noto Sans', sans-serif; color: #444; }
  main * { box-sizing: border-box; }
  span, b { white-space: pre; flex: none; }
  svg { display: block; flex: none; overflow: visible; }
  .serif { font-family: 'Liberation Serif', serif; }

  .photos { position: absolute; left: 0; top: 0; width: 545px; height: 707px; background: #eee; border: 1px solid #3a3a3a; display: flex; flex-direction: column; overflow: hidden; }
  .photos header { height: 48px; flex: none; background: #1f1f1f; color: #fff; display: flex; align-items: center; }
  .home { width: 48px; height: 48px; background: #2b2b2b; display: flex; align-items: center; padding-left: 17px; }
  .file { margin-left: 20px; margin-top: 2px; }
  .dots { margin-left: 41px; margin-top: 3px; }
  .zo { margin-left: 27px; } .zi { margin-left: 25px; }
  .pct { margin-left: 23px; font-size: 13.5px; margin-top: -2px; }
  .win { margin-left: 35px; margin-bottom: 15px; }
  .form { flex: 1; font-family: 'DejaVu Sans', sans-serif; color: #484848; font-size: 18px; line-height: 22px; overflow: hidden; box-shadow: inset -5px 0 4px -4px #bbb; }
  h1 { margin: -6px 0 0 360px; height: 70px; font-size: 36px; line-height: 44px; font-weight: 400; color: #303030; }
  .row { display: flex; height: 60.4px; align-items: center; }
  .row label { width: 120px; padding-left: 119px; box-sizing: content-box; font-size: 24px; line-height: 30px; color: #303030; }
  .row b { font-weight: 400; display: inline-block; }
  .field { width: 180px; height: 24px; background: #fff; border: 2px solid #8291a1; border-width: 2px 1.5px 1.5px; padding-left: 2px; line-height: 19px; outline: 1px solid #f8f8f8; }
  .wide { width: 228px; }
  .field span, .area span, .btn span { display: inline-block; }
  .radios { display: flex; align-items: center; }
  .radios i { width: 15px; height: 15px; border-radius: 50%; border: 1.5px solid #7a8a99; background: linear-gradient(#fff, #c4d7ea); margin: 0 5px 0 5px; }
  .radios .on { background: radial-gradient(circle, #222 0 3.8px, #e6eef6 4.8px); }
  .radios .second { margin-left: 28px; }
  .combos { display: flex; gap: 1px; padding-left: 1px; }
  .combo { height: 26px; border: 1.5px solid #7a8a99; display: flex; justify-content: space-between; align-items: center; padding-left: 3px; background: #eee; }
  .combo:nth-child(2) { padding-left: 1px; }
  .combo:nth-child(3) { margin-left: 11px; }
  .combo em { width: 23px; height: 23px; border-left: 1.5px solid #7a8a99; background: linear-gradient(#fff, #c4d7ea); display: grid; place-items: center; }
  .address { align-items: flex-start; height: 134px; }
  .address label { padding-top: 15px; }
  .area { width: 242px; height: 92px; margin-top: 17px; padding-top: 1px; background: #fff; }
  .terms { display: flex; align-items: center; height: 24px; margin-left: 183px; gap: 5px; margin-top: 5px; }
  .buttons { display: flex; gap: 24px; padding: 36px 0 0 178px; }
  .btn { width: 121px; height: 25px; border: 1.5px solid #7a8a99; background: linear-gradient(#e1eaf3, #fff 40%, #bcd0e4); text-align: center; line-height: 22px; }
  .btn u { display: inline-block; text-decoration: none; border: 1px solid #b2c4d6; height: 22px; line-height: 20px; }
  .result { margin: 35px 0 0 119px; font-size: 24px; line-height: 30px; color: #303030; }
  .shade { height: 8px; flex: none; background: linear-gradient(#b4b4b4, #d2d2d2); }

  .ppt { position: absolute; left: 545px; top: 0; width: 821px; height: 707px; border: 1px solid #b7472a; border-top: 0; background: #e6e6e6; display: flex; flex-direction: column; }
  .ppt header { height: 36px; background: #b7472a; color: #fff; display: flex; flex: none; }
  .quick { margin: 6px 0 0 16px; }
  .title { margin: 12px 0 0 60px; }
  .ctl { margin: 10px 0 0 61px; }
  nav { height: 24px; background: #b7472a; color: #fff; display: flex; align-items: center; flex: none; }
  .filetab { width: 63px; padding-left: 20px; padding-top: 1px; display: flex; }
  .hometab { width: 49px; height: 24px; line-height: 24px; padding-left: 8px; background: #f1f1f1; color: #c43e1c; display: flex; }
  .tabs { display: flex; width: 487px; padding-left: 1px; }
  .bulb { margin-left: 18px; }
  .tell { margin-left: 7px; color: #f7cfc3; } .sign { margin-left: 13px; }
  .share { margin-left: 9px; width: 63px; height: 23px; background: #933922; display: flex; align-items: center; gap: 3px; padding-left: 7px; }
  .ribbon { height: 93px; background: #f1f1f1; border-bottom: 1px solid #c8c8c8; display: flex; flex: none; }
  .group { display: flex; flex-direction: column; justify-content: space-between; background: linear-gradient(#d2d2d2, #d2d2d2) right 4px / 1px 84px no-repeat; background-position: right 4px; height: 92px; }
  .gbody { height: 74px; display: flex; }
  .group footer { height: 16px; width: 100%; display: flex; padding-left: 9px; justify-content: space-between; padding-right: 4px; color: #555; }
  .group footer.mid { padding-left: 26px; }
  .group footer .fl { margin-left: 67px; } .group footer .pl { margin-left: 15px; } .group footer .dl { margin-left: 31px; }
  .la { padding-top: 5px; }
  .big { display: flex; flex-direction: column; align-items: center; }
  .dim { color: #999; }
  .paste { width: 50px; padding-top: 7px; } .paste > span { margin: 2px 0 6px; }
  .tools { margin-top: 4px; margin-left: -2px; }
  .new { width: 48px; padding: 5px 0 0 3px; } .new > span { margin-top: 6px; }
  .sl { display: flex; align-items: center; gap: 3px; }
  .tools2 { margin: 6px 0 0; }
  .font { flex-direction: column; }
  .frow { display: flex; padding: 9px 0 0 4px; }
  .sel { width: 98px; height: 24px; margin-top: 1px; border: 1px solid #c6c6c6; background: #fff; display: flex; justify-content: flex-end; }
  .sel.small { width: 46px; }
  .sel em { width: 13px; background: #e7e7e7; display: grid; place-items: center; }
  .style { margin-top: 7px; }
  .sh { text-shadow: 1.5px 1.5px 1px #ccc; }
  .group .gbody > svg:first-child { margin-top: 2px; }
  .shapes { width: 48px; padding-top: 7px; } .arrange { width: 42px; padding-top: 7px; } .styles { width: 49px; padding-top: 7px; }
  .shapes > span, .arrange > span { margin: 5px 0 6px; } .styles > span { margin-top: 2px; }
  .tools3 { margin: 5px 0 0 -1px; }
  .edit { padding: 4px 1px 0 0; }
  .find { width: 30px; height: 30px; border: 1px solid #ccc; background: #fbfbfb; display: grid; place-items: center; }
  .edit > span { margin: 5px 0 7px; }
  .collapse { margin: 82px 0 0 30px; }

  .work { display: flex; height: 531px; flex: none; border-bottom: 1.5px solid #ababab; }
  aside { width: 102px; border-right: 1px solid #b5b5b5; display: flex; }
  .slides { width: 82px; padding-top: 15px; overflow: hidden; font-size: 14px; }
  .th { height: 40px; display: flex; justify-content: flex-end; padding-right: 20px; gap: 6px; align-items: flex-start; }
  .th > span { margin-top: 0; }
  .pic { width: 36px; height: 22px; border: 1px solid #bdbdbd; background: #fff; margin-top: 3px; overflow: hidden; flex: none; }
  .cur > span { color: #d24726; }
  .cur .pic { outline: 2.5px solid #f0704c; border-color: #f0704c; }
  .vbar { width: 15px; display: flex; flex-direction: column; padding: 2px 0 0; height: 530px; }
  .sb-btn { width: 15px; height: 15px; background: #fff; border: 1px solid #ababab; display: grid; place-items: center; flex: none; }
  .vbar .track { flex: 1; background: #dadada; }
  .vbar .handle { background: #fff; border: 1px solid #ababab; height: 112px; margin-top: 34px; }
  .edit-area { width: 701px; height: 530px; overflow: hidden; }
  .hruler { margin: 5px 0 0 31px; overflow: hidden; }
  .mid-row { display: flex; margin-top: 9px; height: 481px; }
  .vruler { margin: 1px 9px 0 7px; overflow: hidden; }
  .slide { width: 672px; height: 481px; background: #fff; color: #000; font: 18.6px/26.3px 'Liberation Sans', sans-serif; overflow: hidden; }
  .head { margin-left: 101px; }
  .cols { display: flex; padding-top: 35.4px; }
  ul { margin: 0; padding: 0; list-style: none; width: 382px; flex: none; }
  li { height: 26.32px; display: flex; align-items: center; }
  li::before { content: ''; width: 4px; height: 4px; border-radius: 50%; background: #000; margin-right: 25px; margin-left: 1px; }
  ul:nth-child(2) li::before { margin-left: 0; margin-right: 26px; }
  li:nth-child(15) { margin-top: 3px; }
  li.note { font-size: 22px; font-style: italic; }
  ul:nth-child(2) li.note::before { width: 6px; height: 6px; margin-right: 25px; }
  .hbar { display: flex; width: 695px; margin: 1px 0 0 4px; height: 15px; }
  .hbar .track { flex: 1; background: #dadada; }
  .hbar .handle { width: 431px; height: 15px; margin-left: 162px; background: #fff; border: 1px solid #ababab; }
  .vbar.right { height: 508px; } .vbar.right .handle { height: 17px; margin-top: 56px; }
  .status { flex: 1; background: #f1f1f1; display: flex; align-items: center; color: #555; border-top: 1px solid #d0d0d0; font-size: 11.5px; }
  .status > * { margin-top: -2px; }
  .s1 { margin-left: 8px; } .s2 { margin-left: 19px; } .s3 { margin-left: 16px; } .s4 { margin-left: 109px; } .s5 { margin-left: 4px; } .s6 { margin-left: 21px; } .s7 { margin-left: 4px; }
  .view { margin: 0 0 0 19px; width: 38px; height: 22px; background: #c6c6c6; display: grid; place-items: center; }
  .s8 { margin-left: 12px; } .slider { margin-left: 17px; } .s9 { margin: -2px 13px 0 16px; }

  .taskbar { position: absolute; left: 0; top: 707px; width: 1366px; height: 61px; background: linear-gradient(90deg, #22383f, #22343f 45%, #1a2742); color: #fff; display: flex; align-items: center; }
  .sys { display: flex; gap: 19px; width: 115px; padding-left: 9.5px; }
  .apps { width: 1010px; height: 61px; }
  .line { display: flex; height: 30px; }
  .line.second { height: 31px; }
  .pins { width: 429px; padding: 7px 0 0 4px; display: flex; gap: 19.9px; }
  .task { height: 30px; border-bottom: 2px solid #76b9ed; display: flex; align-items: center; gap: 4px; padding-left: var(--pad); padding-top: 2px; flex: none; }
  .second .task { height: 31px; }
  .task.bare { border: 0; padding-left: 10px; padding-top: 0; }
  .task.active { background: #4b5b65; }
  .up { margin-left: 13px; } .tray { margin-left: 10px; }
  .lang { margin-left: 8px; }
  .clock { width: 62px; margin-left: 12px; margin-top: 1px; display: flex; flex-direction: column; align-items: center; line-height: 19.5px; }
  .act { margin-left: 18px; }
  .peek { margin-left: 19px; width: 1px; height: 61px; background: #66707c; }
  .notes-layer { position: absolute; left: 0; top: 0; font-family: 'Liberation Sans', sans-serif; }
  .one { font-family: Roboto, sans-serif; }
</style>
